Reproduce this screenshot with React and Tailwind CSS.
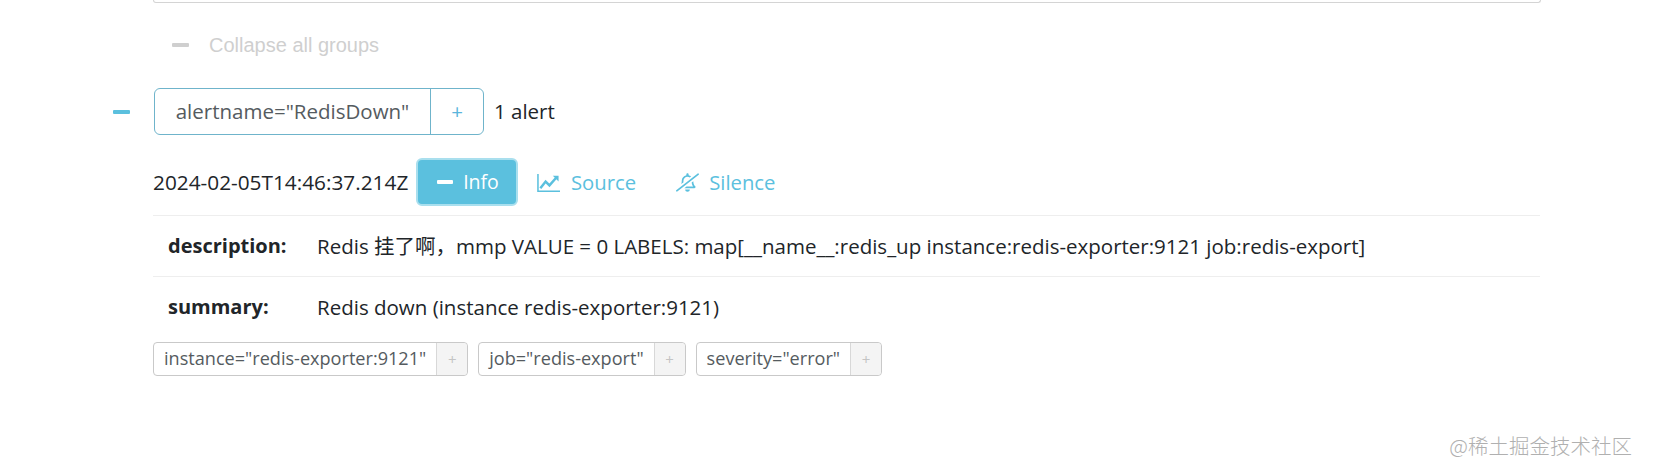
import { FaRegBellSlash } from "react-icons/fa";

const font = "font-['Open_Sans','Noto_Sans_CJK_SC',sans-serif]";

function Minus({ className }) {
  return <span className={"block h-[4px] w-[17px] rounded-[1px] " + className}></span>;
}

function ChartIcon() {
  return (
    <svg width="23" height="20" viewBox="0 0 24 20" fill="none">
      <path d="M1 0.5V18.5H24" stroke="#5bc0de" strokeWidth="1.6" />
      <path d="M3.5 15.5L9 8.5L13 12.5L20.5 4" stroke="#5bc0de" strokeWidth="2.6" />
      <path d="M16.5 2.5H22.5V8.5Z" fill="#5bc0de" />
    </svg>
  );
}

function Label({ text }) {
  return (
    <div className="flex h-[34px] rounded-[4px] border border-[#c9c9c9] text-[18.1px] text-[#555b60]">
      <span className="flex items-center px-[10px]">{text}</span>
      <span className="flex w-[31px] items-center justify-center rounded-r-[4px] border-l border-[#d8d8d8] bg-[#f4f4f4] text-[15px] text-[#c4c4c4]">+</span>
    </div>
  );
}

function Row({ name, value }) {
  return (
    <div className="flex h-[61px] items-center border-t border-[#eeeeee] pl-[15px]">
      <span className="w-[149px] text-[20px] font-bold text-[#212529]">{name}</span>
      <span className="text-[20.5px] text-[#212529]">{value}</span>
    </div>
  );
}

export default function App() {
  return (
    <div className={"h-[464px] w-[1664px] overflow-hidden bg-white pl-[113px] " + font}>
      <div className="ml-[40px] h-[3px] w-[1388px] rounded-b-[4px] border-x border-b border-[#d4d4d4]"></div>

      <div className="ml-[59px] mt-[26px] flex h-[32px] items-center">
        <Minus className="bg-[#cfcfcf]" />
        <span className="ml-[20px] font-['Liberation_Sans',sans-serif] text-[20px] text-[#cfcfcf]">Collapse all groups</span>
      </div>

      <div className="mt-[27px] flex items-center">
        <Minus className="bg-[#5bc0de]" />
        <div className="ml-[24px] flex h-[47px] w-[330px] rounded-[6px] border border-[#6fb4cb] text-[20.5px] text-[#555b60]">
          <span className="flex w-[276px] items-center justify-center border-r border-[#6fb4cb]">alertname="RedisDown"</span>
          <span className="flex flex-1 items-center justify-center text-[#5bb5dc]">+</span>
        </div>
        <span className="ml-[10px] text-[20.5px] text-[#212529]">1 alert</span>
      </div>

      <div className="ml-[40px] mt-[22px] flex h-[50px] items-center text-[20.3px]">
        <span className="w-[263px] pt-[1px] text-[20.8px] text-[#212529]">2024-02-05T14:46:37.214Z</span>
        <span className="flex h-[48px] w-[102px] items-center justify-center gap-[10px] rounded-[6px] border-2 border-[#a9dfee] bg-[#5bc0de] pl-[2px] text-[19.5px] text-white">
          <span className="block h-[4px] w-[16px] rounded-[1px] bg-white"></span>Info
        </span>
        <span className="ml-[19px] flex items-center gap-[11px] pt-[1px] text-[#5bc0de]">
          <ChartIcon />Source
        </span>
        <span className="ml-[40px] flex items-center gap-[10px] pt-[1px] text-[#5bc0de]">
          <FaRegBellSlash className="-scale-x-100 text-[23px]" />Silence
        </span>
      </div>

      <div className="ml-[40px] mt-[8px] w-[1387px]">
        <Row name="description:" value="Redis 挂了啊，mmp VALUE = 0 LABELS: map[__name__:redis_up instance:redis-exporter:9121 job:redis-export]" />
        <Row name="summary:" value="Redis down (instance redis-exporter:9121)" />
      </div>

      <div className="ml-[40px] mt-[5px] flex gap-[10px]">
        <Label text={'instance="redis-exporter:9121"'} />
        <Label text={'job="redis-export"'} />
        <Label text={'severity="error"'} />
      </div>

      <div className="mt-[54px] pr-[32px] text-right font-['Noto_Sans_CJK_SC',sans-serif] text-[20.5px] font-light text-[#b0b0b0]">@稀土掘金技术社区</div>
    </div>
  );
}
